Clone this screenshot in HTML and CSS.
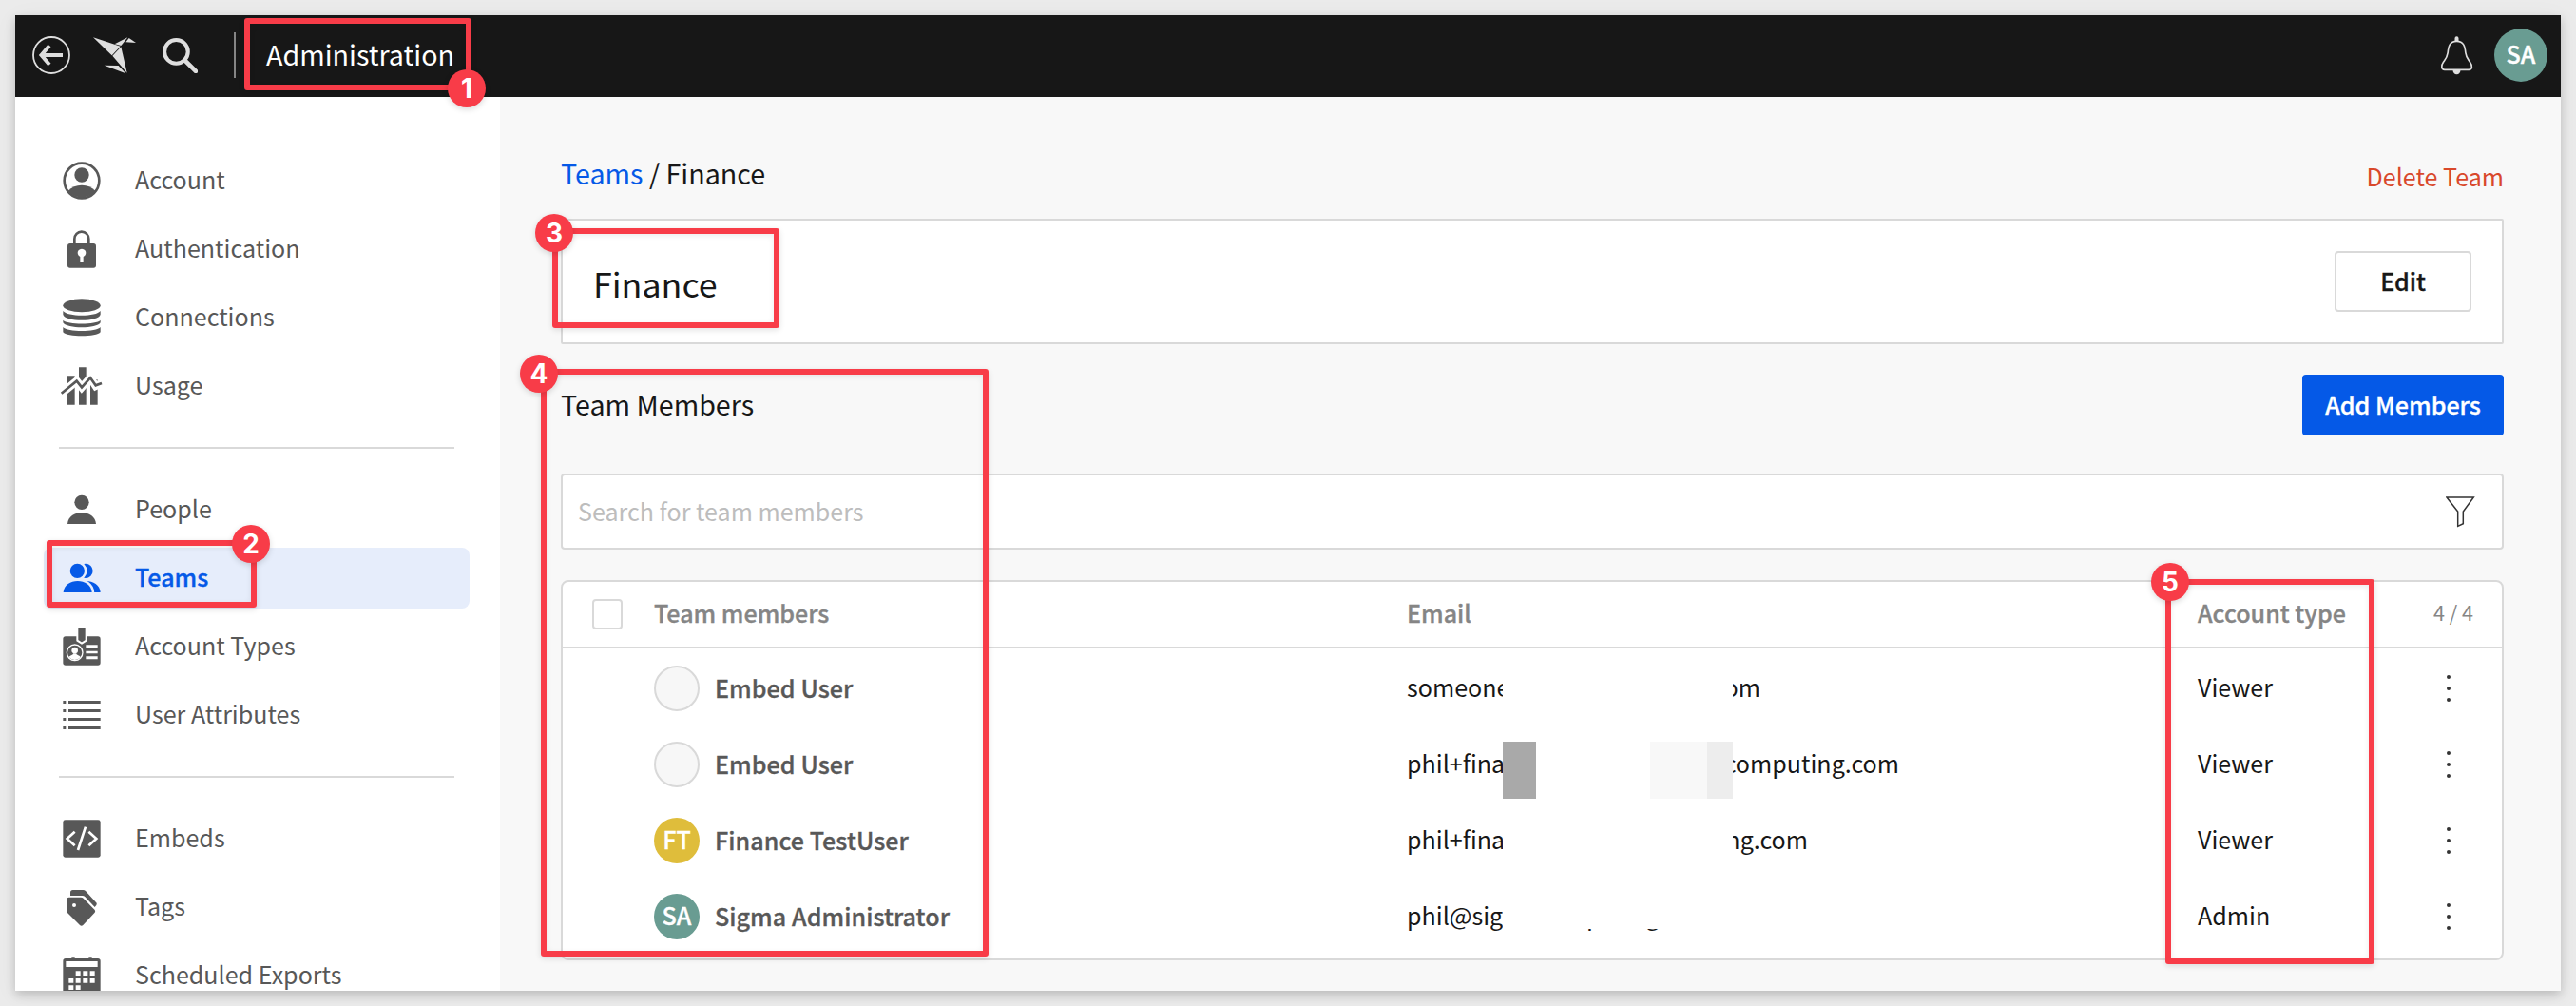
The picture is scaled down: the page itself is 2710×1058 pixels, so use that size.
FILE: index.html
```html
<!DOCTYPE html>
<html lang="en">
<head>
<meta charset="utf-8">
<title>Administration</title>
<link rel="stylesheet" href="styles.css">
</head>
<body>
<div class="window">
  <header class="topbar">
    <svg class="back" viewBox="0 0 40 40"><circle cx="20" cy="20" r="19" fill="none" stroke="#dedede" stroke-width="1.8"/><path d="M32 20H10M18 10L9.5 20L18 30" fill="none" stroke="#dedede" stroke-width="4"/></svg>
    <svg class="bird" viewBox="204 38 135 117" fill="#dedede"><path d="M204 39L290 67L263 96Z"/><path d="M272 60L313 39L292 65Z"/><path d="M317 41L339 56L307 54Z"/><path d="M265 97L292 69L311 151Z"/><path d="M239 127L284 128L307 153Z"/></svg>
    <svg class="find" viewBox="0 0 36 36"><circle cx="14" cy="14" r="12" fill="none" stroke="#dedede" stroke-width="4"/><path d="M23 23L34 34" stroke="#dedede" stroke-width="4.5" stroke-linecap="round"/></svg>
    <span class="bar"></span>
    <h1 class="app-title">Administration</h1>
    <svg class="bell" viewBox="1010 113 104 123"><path d="M1062 129C1040 129 1036 145 1034 165C1032 180 1028 184 1020 195C1012 206 1013 219 1024 219H1100C1112 219 1112 206 1104 195C1097 184 1092 180 1090 165C1088 145 1084 129 1062 129Z" fill="none" stroke="#dedede" stroke-width="5"/><path d="M1056 129V120A6 6 0 0 1 1068 120V129ZM1050 220H1074A12 14 0 0 1 1050 220Z" fill="#dedede"/></svg>
    <span class="avatar teal large">SA</span>
  </header>
  <div class="body">
    <nav class="sidebar">
      <a class="item"><svg class="icon" viewBox="0 0 120 120"><circle cx="60" cy="60" r="55" fill="none" stroke="currentColor" stroke-width="8"/><circle cx="60" cy="42" r="23"/><path d="M17 92C28 80 42 74 60 74S92 80 103 92A55 55 0 0 1 17 92Z"/></svg><span>Account</span></a>
      <a class="item"><svg class="icon" viewBox="0 0 120 120"><rect x="15" y="42" width="90" height="77" rx="8"/><path d="M37 46V28A22.500 23 0 0 1 82 28V46" fill="none" stroke="currentColor" stroke-width="8"/><path d="M55 84A13 13 0 1 1 65 84V102H55Z" fill="#fff"/></svg><span>Authentication</span></a>
      <a class="item"><svg class="icon" viewBox="0 0 120 120"><ellipse cx="60" cy="22" rx="59" ry="21"/><path d="M1 39C14 58 106 58 119 39V50C114 74 6 74 1 50ZM1 68C14 83 106 83 119 68V76C108 96 12 96 1 76ZM1 90C14 106 106 106 119 90V106C108 122 12 122 1 106Z"/></svg><span>Connections</span></a>
      <a class="item"><svg class="icon" viewBox="0 0 120 120"><path d="M15 28H38V119H15ZM51 1H74V119H51ZM87 40H110V119H87Z"/><path d="M-4 83L44 44L60 64L87 34L104 60L123 51" fill="none" stroke="#fff" stroke-width="25"/><path d="M-4 83L44 44L60 64L87 34L104 58L123 51" fill="none" stroke="currentColor" stroke-width="8"/></svg><span>Usage</span></a>
      <hr>
      <a class="item"><svg class="icon" viewBox="0 0 120 120"><circle cx="60" cy="37" r="23"/><path d="M15 105C18 57 102 57 105 105Z"/></svg><span>People</span></a>
      <a class="item active"><svg class="icon" viewBox="0 0 120 120"><circle cx="72" cy="37" r="23"/><path d="M28 105C31 57 116 57 119 105Z"/><g stroke="#e6edfb" stroke-width="15"><circle cx="46" cy="37" r="23"/><path d="M2 105C5 57 89 57 92 105Z"/></g><circle cx="46" cy="37" r="23"/><path d="M2 105C5 57 89 57 92 105Z"/><path d="M-8 105H128V114H-8Z" fill="#e6edfb"/></svg><span>Teams</span></a>
      <a class="item"><svg class="icon" viewBox="0 0 120 120"><rect x="1" y="28" width="118" height="91" rx="8"/><path d="M46 -4H74V41L60 50L46 41Z" stroke="#fff" stroke-width="6"/><path d="M40 -10H80V0H40Z" fill="#fff"/><circle cx="38" cy="79" r="25" fill="none" stroke="#fff" stroke-width="4"/><circle cx="38" cy="72" r="10" fill="#fff"/><path d="M20 94C22 87 33 88 33 82H43C43 88 54 87 56 94A25 25 0 0 1 20 94ZM73 55H110V64H73ZM73 74H110V82H73ZM73 91H110V100H73Z" fill="#fff"/></svg><span>Account Types</span></a>
      <a class="item"><svg class="icon" viewBox="0 0 120 120"><path d="M1 15H10V24H1ZM18 15H119V24H18ZM1 42H10V51H1ZM18 42H119V51H18ZM1 69H10V78H1ZM18 69H119V78H18ZM1 96H10V105H1ZM18 96H119V105H18Z"/></svg><span>User Attributes</span></a>
      <hr>
      <a class="item"><svg class="icon" viewBox="0 0 120 120"><rect x="1" y="1" width="118" height="118" rx="7"/><path d="M38 38L14 60L38 82M72 23L48 96M82 38L106 60L82 82" fill="none" stroke="#fff" stroke-width="8"/></svg><span>Embeds</span></a>
      <a class="item"><svg class="icon" viewBox="0 0 120 120"><path d="M24 24V14Q24 6 32 6H64Q69 6 72 9L107 47Q108 50 106 54L101 60L70 27Q67 24 62 24Z"/><path d="M12 37Q12 29 20 29H57Q62 29 65 32L101 69Q104 73 101 77L64 117Q59 121 54 117L15 78Q12 75 12 70Z"/><circle cx="36" cy="54" r="6" fill="#fff"/></svg><span>Tags</span></a>
      <a class="item"><svg class="icon" viewBox="0 0 120 120"><rect x="1" y="6" width="118" height="113" rx="8"/><path d="M28 1H38V8H28ZM82 1H92V8H82Z"/><path d="M10 15H110V33H10ZM41 46H56V60H41ZM64 46H79V60H64ZM86 46H101V60H86ZM19 69H34V83H19ZM41 69H56V83H41ZM64 69H79V83H64ZM86 69H101V83H86ZM19 91H34V105H19ZM41 91H56V105H41Z" fill="#fff"/></svg><span>Scheduled Exports</span></a>
    </nav>
    <main class="main">
      <div class="head">
        <div class="crumbs"><a>Teams</a> / Finance</div>
        <a class="delete">Delete Team</a>
      </div>
      <section class="card"><h2>Finance</h2><button class="edit">Edit</button></section>
      <div class="members-head"><h3>Team Members</h3><button class="add">Add Members</button></div>
      <div class="search"><span>Search for team members</span><svg class="filter" viewBox="-1 -1 31 33"><path d="M0 0H28.300L17.300 15V27.700L11.700 30.400V15Z" fill="none" stroke="#333" stroke-width="1.500"/></svg></div>
      <section class="table">
        <div class="row thead"><span class="check"></span><span>Team members</span><span>Email</span><span>Account type</span><span class="count">4 / 4</span></div>
        <div class="row"><span></span><div class="person"><span class="avatar blank"></span><b>Embed User</b></div><div class="email"><span class="start">someone</span><span class="gap"></span><span class="end om">om</span></div><span>Viewer</span><i class="dots"></i></div>
        <div class="row"><span></span><div class="person"><span class="avatar blank"></span><b>Embed User</b></div><div class="email"><span class="start">phil+fina</span><span class="gap swatches"><i class="dark"></i><i class="pale"></i><i class="light"></i></span><span class="end computing">computing.com</span></div><span>Viewer</span><i class="dots"></i></div>
        <div class="row"><span></span><div class="person"><span class="avatar gold">FT</span><b>Finance TestUser</b></div><div class="email"><span class="start">phil+fina</span><span class="gap"></span><span class="end ng">ng.com</span></div><span>Viewer</span><i class="dots"></i></div>
        <div class="row"><span></span><div class="person"><span class="avatar teal">SA</span><b>Sigma Administrator</b></div><div class="email"><span>phil@sigmacomputing.com</span><i class="cover"></i></div><span>Admin</span><i class="dots"></i></div>
      </section>
    </main>
  </div>
</div>
<div class="mark m1"><span class="num">1</span></div>
<div class="mark m2"><span class="num">2</span></div>
<div class="mark m3"><span class="num">3</span></div>
<div class="mark m4"><span class="num">4</span></div>
<div class="mark m5"><span class="num">5</span></div>
</body>
</html>
```
FILE: styles.css
```css
* { box-sizing: border-box; }
body {
  margin: 0; padding: 16px; height: 1058px; position: relative; overflow: hidden;
  background: #ebebeb; color: #171717;
  font-family: "Noto Sans CJK SC", sans-serif; font-size: 25.070px; line-height: 32px;
}
h1, h2, h3 { margin: 0; font-weight: 400; }
button { font: inherit; font-weight: 500; border-radius: 4px; height: 64px; padding: 0 0 2px; }
button, .avatar, .active span, .person b, .thead > span { -webkit-text-stroke: .35px currentColor; }
.window { width: 2678px; height: 1026px; display: flex; flex-direction: column; overflow: hidden; background: #f8f8f8; }
body::before {
  content: ""; position: absolute; inset: 16px; z-index: -1;
  box-shadow: 0 4px 10px rgba(0,0,0,.18), 0 4px 24px rgba(0,0,0,.05);
}

.topbar { flex: none; height: 86px; background: #171717; display: flex; align-items: center; padding: 0 14px 2px 18px; color: #fff; }
.back { width: 40px; height: 40px; }
.bird { width: 45px; height: 39px; margin-left: 24px; }
.find { width: 37px; height: 37px; margin-left: 28px; }
.bar { width: 2px; height: 48px; margin-left: 38px; background: #858585; }
.app-title { margin-left: 32px; font-size: 28.650px; line-height: 40px; padding-bottom: 2px; }
.bell { width: 35px; height: 41px; margin-left: auto; margin-right: 22px; }
.avatar { width: 48px; height: 48px; flex: none; border-radius: 50%; display: flex; align-items: center; justify-content: center; padding-bottom: 4px; color: #fff; font-weight: 500; }
.avatar.large { width: 56px; height: 56px; }
.teal { background: #699c92; }
.gold { background: #dfbd3b; }
.blank { background: #f7f7f7; border: 2px solid #d9d9d9; }

.body { flex: 1; min-height: 0; display: flex; }
.sidebar { flex: none; width: 510px; background: #fff; padding: 56px 32px 0 30px; display: flex; flex-direction: column; gap: 8px; overflow: hidden; color: #585858; }
.item { flex: none; height: 64px; display: flex; align-items: center; gap: 36px; padding-left: 20px; border-radius: 8px; }
.item span { padding-bottom: 4px; }
.icon { width: 40px; height: 40px; overflow: visible; fill: currentColor; }
.active { background: #e6edfb; color: #0559e7; font-weight: 500; }
.sidebar hr { flex: none; width: 416px; height: 2px; margin: 24px 0 24px 16px; border: 0; background: #d9d9d9; }

.main { flex: 1; padding: 0 60px 0 64px; }
.head { height: 128px; display: flex; justify-content: space-between; align-items: flex-start; }
.crumbs { font-size: 28.650px; line-height: 40px; margin-top: 60px; }
.crumbs a { color: #0559e7; }
.delete { margin-top: 67px; color: #d9482b; }
.card { height: 132px; border: 2px solid #d9d9d9; border-radius: 2px; background: #fff; display: flex; justify-content: space-between; align-items: center; padding: 0 32px; }
.card h2 { font-size: 35.800px; line-height: 48px; padding-top: 2px; }
.edit { width: 144px; background: #fff; color: #171717; border: 2px solid #d9d9d9; }
.members-head { height: 64px; margin: 32px 0 40px; display: flex; justify-content: space-between; align-items: center; }
.members-head h3 { font-size: 28.650px; line-height: 40px; padding-bottom: 2px; }
.add { width: 212px; border: 0; background: #0559e7; color: #fff; }
.search { height: 80px; border: 2px solid #d9d9d9; border-radius: 4px; background: #fff; display: flex; justify-content: space-between; align-items: center; padding: 0 28px 0 16px; color: #bdbdbd; }
.search span { padding-bottom: 3px; }
.filter { width: 31px; height: 33px; }

.table { height: 400px; margin-top: 32px; border: 2px solid #d9d9d9; border-radius: 8px; background: #fff; }
.row { height: 80px; display: grid; grid-template-columns: 96px 793px 831px 248px 1fr; align-items: center; }
.row > span { padding-bottom: 4px; }
.thead { height: 70px; margin-bottom: 2px; border-bottom: 2px solid #d9d9d9; color: #858585; font-weight: 500; }
.thead > :nth-child(3) { margin-left: -1px; }
.thead .check { width: 32px; height: 32px; margin-left: 31px; border: 2px solid #d9d9d9; border-radius: 4px; padding: 0; }
.thead .count { font-size: 21.500px; font-weight: 400; -webkit-text-stroke: 0; }
.person { display: flex; align-items: center; gap: 16px; }
.person b { font-weight: 500; letter-spacing: .06px; color: #585858; padding-bottom: 2px; }
.email { position: relative; height: 80px; margin-left: -1px; display: flex; align-items: center; }
.email > span { padding-bottom: 4px; white-space: nowrap; }
.start { width: 101px; overflow: hidden; }
.gap { width: 242px; height: 80px; }
.end { display: flex; justify-content: flex-end; overflow: hidden; }
.om { width: 29px; }
.computing { width: 175px; }
.ng { width: 79px; }
.email > .swatches { display: flex; padding: 16px 0 4px; }
.dark { width: 35px; background: #a9a9a9; }
.pale { width: 60px; margin-left: 120px; background: #f8f8f8; }
.light { width: 27px; background: #ededed; }
.cover { position: absolute; left: 101px; top: 10px; width: 242px; height: 43px; background: #fff; }
.dots { width: 4px; height: 4px; margin-left: 14px; border-radius: 50%; background: #333; box-shadow: 0 -12px #333, 0 12px #333; }

.mark { position: absolute; border: 6px solid #f83c48; border-radius: 3px; box-shadow: 0 2px 6px rgba(0,0,0,.12), inset 0 2px 6px rgba(0,0,0,.08); }
.num { position: absolute; width: 40px; height: 40px; border-radius: 50%; background: #f83c48; color: #fff; font: 700 28px/40px Inter, sans-serif; text-align: center; box-shadow: 0 2px 6px rgba(0,0,0,.15); }
.m1 { left: 257px; top: 19px; width: 239px; height: 76px; }
.m1 .num { left: 208px; top: 48px; }
.m2 { left: 49px; top: 568px; width: 221px; height: 71px; }
.m2 .num { left: 189px; top: -22px; }
.m3 { left: 581px; top: 240px; width: 239px; height: 105px; }
.m3 .num { left: -24px; top: -21px; }
.m4 { left: 569px; top: 388px; width: 471px; height: 618px; }
.m4 .num { left: -28px; top: -21px; }
.m5 { left: 2278px; top: 609px; width: 220px; height: 405px; }
.m5 .num { left: -21px; top: -23px; }
```
